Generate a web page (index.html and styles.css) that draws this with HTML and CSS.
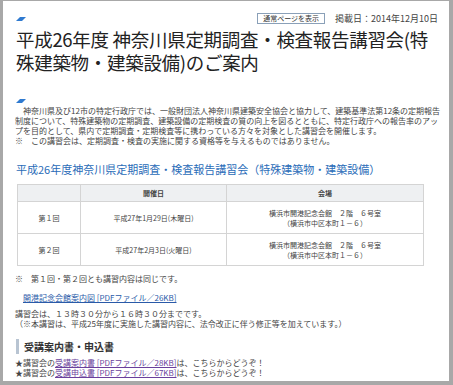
FILE: index.html
```html
<!DOCTYPE html>
<html lang="ja">
<head>
    <meta charset="UTF-8">
    <title>平成26年度 神奈川県定期調査・検査報告講習会のご案内</title>
    <link rel="stylesheet" href="styles.css">
</head>
<body>

<div class="page">
    <div class="topbar">
        <span class="mark"></span>
        <div class="tools">
            <span class="btn">通常ページを表示</span>
            <span class="date">掲載日：2014年12月10日</span>
        </div>
    </div>
    <h1 class="title">平成26年度 神奈川県定期調査・検査報告講習会(特殊建築物・建築設備)のご案内</h1>

    <span class="mark mark2"></span>
    <div class="intro">
        <p>　神奈川県及び12市の特定行政庁では、一般財団法人神奈川県建築安全協会と協力して、建築基準法第12条の定期報告制度について、特殊建築物の定期調査、建築設備の定期検査の質の向上を図るとともに、特定行政庁への報告率のアップを目的として、県内で定期調査・定期検査等に携わっている方々を対象とした講習会を開催します。</p>
        <p>※　この講習会は、定期調査・検査の実施に関する資格等を与えるものではありません。</p>
    </div>

    <h2 class="sub">平成26年度神奈川県定期調査・検査報告講習会（特殊建築物・建築設備）</h2>

    <table class="sched">
        <tr>
            <th class="c1"></th>
            <th class="c2">開催日</th>
            <th>会場</th>
        </tr>
        <tr>
            <td>第１回</td>
            <td>平成27年1月29日(木曜日)</td>
            <td>横浜市開港記念会館　２階　６号室<br>（横浜市中区本町１－６）</td>
        </tr>
        <tr>
            <td>第２回</td>
            <td>平成27年2月3日(火曜日)</td>
            <td>横浜市開港記念会館　２階　６号室<br>（横浜市中区本町１－６）</td>
        </tr>
    </table>

    <p class="note">※　第１回・第２回とも講習内容は同じです。</p>
    <p class="map"><a href="#">開港記念会館案内図 [PDFファイル／26KB]</a></p>
    <p class="time">講習会は、１３時３０分から１６時３０分までです。<br>（※本講習は、平成25年度に実施した講習内容に、法令改正に伴う修正等を加えています。）</p>

    <h3 class="sec">受講案内書・申込書</h3>
    <p class="dl">★講習会の<a href="#" class="seen">受講案内書 [PDFファイル／28KB]</a>は、こちらからどうぞ！<br>★講習会の<a href="#" class="seen">受講申込書 [PDFファイル／67KB]</a>は、こちらからどうぞ！</p>
</div>

</body>
</html>
```

FILE: styles.css
```css
html, body {
    margin: 0;
    height: 100%;
}
body {
    background-color: #a8a8a8;
    padding: 1px 4px 4px 3px;
    box-sizing: border-box;
    font-family: "Noto Sans CJK JP", "Noto Sans", sans-serif;
    color: #333;
}
.page {
    background-color: #fff;
    height: 100%;
    overflow: hidden;
    padding: 0 8px 0 12px;
    box-sizing: border-box;
}
.topbar {
    display: flex;
    align-items: center;
    justify-content: space-between;
    padding-top: 11px;
    padding-right: 2px;
}
.mark {
    display: block;
    width: 6px;
    height: 4px;
    background-color: #2f7ad0;
    transform: skewX(-45deg);
    margin-left: 3px;
}
.tools {
    display: flex;
    align-items: center;
    gap: 10px;
    padding-right: 1px;
}
.btn {
    border: 1px solid #8aa0b8;
    font-size: 7px;
    line-height: 9px;
    padding: 0 5px;
    color: #333;
}
.date {
    font-size: 9px;
    color: #444;
}
.title {
    font-size: 18.5px;
    letter-spacing: -0.3px;
    font-weight: normal;
    line-height: 23px;
    margin: 3px 0 0 1px;
    color: #222;
}
.mark2 {
    margin-top: 25px;
}
.intro {
    font-size: 8px;
    line-height: 10px;
    margin-top: 3px;
    color: #444;
}
.intro p {
    margin: 0;
}
.sub {
    font-size: 11px;
    font-weight: normal;
    line-height: 14px;
    color: #2a6cb8;
    margin: 16px 0 8px 1px;
}
.sched {
    width: 407px;
    margin-left: 2px;
    border-collapse: collapse;
    font-size: 7px;
    line-height: 10px;
    color: #444;
}
.sched th {
    background-color: #eef0f2;
    height: 16px;
    padding: 0;
    font-weight: bold;
    border: 1px solid #d4d4d4;
}
.sched td {
    height: 31px;
    padding: 0;
    text-align: center;
    border: 1px solid #d4d4d4;
}
.c1 {
    width: 62px;
}
.c2 {
    width: 145px;
}
.note, .map, .time, .dl {
    font-size: 8px;
    line-height: 10px;
    margin: 0;
    color: #444;
}
.note {
    margin-top: 8px;
}
.map {
    margin: 9px 0 0 8px;
}
.time {
    margin-top: 6px;
}
a {
    color: #2a5aa8;
}
a.seen {
    color: #6a3f9c;
}
.sec {
    font-size: 10px;
    font-weight: bold;
    margin: 10px 0 0 1px;
    padding-left: 5px;
    border-left: 3px solid #b8c4d2;
    line-height: 15px;
    color: #333;
}
.dl {
    margin-top: 4px;
}
```
